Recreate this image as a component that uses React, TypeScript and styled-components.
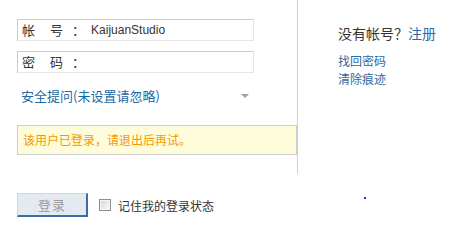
import React from "react";
import styled, { createGlobalStyle } from "styled-components";

const Global = createGlobalStyle`
  html, body { margin: 0; padding: 0; background: #fff; }
  body {
    font-family: "Noto Sans CJK SC", "Liberation Sans", sans-serif;
    color: #333;
  }
`;

const Page = styled.div`
  position: relative;
  width: 459px;
  height: 241px;
`;

const Top = styled.div`
  display: flex;
`;

const LeftPane = styled.div`
  box-sizing: border-box;
  width: 298px;
  height: 174px;
  border-right: 1px solid #cfcfcf;
  padding: 19px 0 0 17px;
`;

const Field = styled.div<{ $mt?: number }>`
  box-sizing: border-box;
  width: 237px;
  height: 22px;
  margin-top: ${(p) => p.$mt ?? 0}px;
  border-top: 1px solid #cbcbcb;
  border-left: 1px solid #cbcbcb;
  border-right: 1px solid #e6e6e6;
  border-bottom: 1px solid #e6e6e6;
  display: flex;
  align-items: center;
  padding-left: 4px;
`;

const Char = styled.span<{ $mr: number }>`
  font-size: 13px;
  line-height: 20px;
  color: #333;
  margin-right: ${(p) => p.$mr}px;
`;

const Value = styled.span`
  font-family: "Liberation Sans", sans-serif;
  font-size: 12px;
  color: #333;
  margin-left: 1px;
`;

const SecurityRow = styled.div`
  width: 228px;
  height: 20px;
  margin-top: 12px;
  padding-left: 4px;
  display: flex;
  align-items: center;
  justify-content: space-between;
`;

const SecurityText = styled.span`
  font-size: 13px;
  color: #1b69a3;
`;

const Arrow = styled.span`
  width: 0;
  height: 0;
  border-left: 4px solid transparent;
  border-right: 4px solid transparent;
  border-top: 4px solid #a0a0a0;
  margin-top: 2px;
`;

const Notice = styled.div`
  box-sizing: border-box;
  width: 280px;
  height: 30px;
  margin-top: 20px;
  background: #fffcdc;
  border: 1px solid #cccccc;
  padding-left: 5px;
  font-size: 12px;
  line-height: 27px;
  color: #f39a00;
`;

const RightPane = styled.div`
  padding: 25px 0 0 40px;
`;

const Title = styled.div`
  font-size: 14px;
  line-height: 16px;
  color: #333;
`;

const Link = styled.a`
  color: #2d6aa5;
  text-decoration: none;
`;

const LinkList = styled.div`
  margin-top: 11px;
  display: flex;
  flex-direction: column;
  font-size: 12px;
  line-height: 18px;
`;

const Bottom = styled.div`
  display: flex;
  align-items: center;
  margin-top: 19px;
  padding-left: 17px;
`;

const LoginButton = styled.button`
  box-sizing: border-box;
  width: 71px;
  height: 24px;
  padding: 0;
  background: #e3eaf1;
  border-top: 1px solid #cad6e2;
  border-left: 1px solid #cad6e2;
  border-right: 2px solid #3a6ea5;
  border-bottom: 2px solid #3a6ea5;
  color: #9a9a9a;
  font-family: "Noto Sans CJK SC", sans-serif;
  font-size: 13px;
  letter-spacing: 1px;
`;

const Check = styled.span`
  box-sizing: border-box;
  width: 12px;
  height: 12px;
  margin-left: 11px;
  border: 1px solid #8e8e8e;
  box-shadow: inset 0 0 0 1px #f4f4f4;
  background: linear-gradient(135deg, #d6d6d6, #fbfbfb);
`;

const CheckLabel = styled.span`
  margin-left: 7px;
  font-size: 12px;
  color: #333;
`;

const Dot = styled.span`
  position: absolute;
  left: 364px;
  top: 197px;
  width: 2px;
  height: 2px;
  background: #1a2dff;
`;

export default function App() {
  return (
    <Page>
      <Global />
      <Top>
        <LeftPane>
          <Field>
            <Char $mr={15}>帐</Char>
            <Char $mr={9}>号</Char>
            <Char $mr={5}>：</Char>
            <Value>KaijuanStudio</Value>
          </Field>
          <Field $mt={10}>
            <Char $mr={15}>密</Char>
            <Char $mr={9}>码</Char>
            <Char $mr={5}>：</Char>
          </Field>
          <SecurityRow>
            <SecurityText>安全提问(未设置请忽略)</SecurityText>
            <Arrow />
          </SecurityRow>
          <Notice>该用户已登录，请退出后再试。</Notice>
        </LeftPane>
        <RightPane>
          <Title>
            没有帐号？<Link href="#">注册</Link>
          </Title>
          <LinkList>
            <Link href="#">找回密码</Link>
            <Link href="#">清除痕迹</Link>
          </LinkList>
        </RightPane>
      </Top>
      <Bottom>
        <LoginButton>登录</LoginButton>
        <Check />
        <CheckLabel>记住我的登录状态</CheckLabel>
      </Bottom>
      <Dot />
    </Page>
  );
}
